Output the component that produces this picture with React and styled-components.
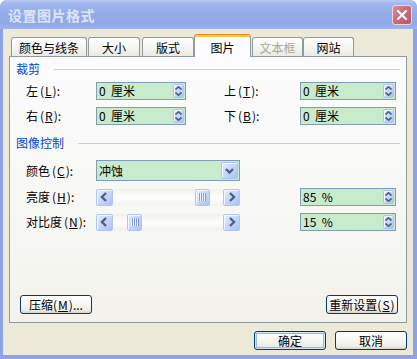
import React from 'react';
import styled, { createGlobalStyle, css } from 'styled-components';

const GlobalStyle = createGlobalStyle`
  html, body { margin: 0; padding: 0; background: #ffffff; }
  body {
    font-family: "Noto Sans CJK SC", "Liberation Sans", sans-serif;
    font-size: 12px;
    color: #000;
  }
  * { box-sizing: border-box; }
`;

const Window = styled.div`
  width: 417px;
  height: 359px;
  display: flex;
  flex-direction: column;
  border-radius: 7px 7px 0 0;
  overflow: hidden;
  background: #8ea3e6;
`;

const TitleBar = styled.div`
  height: 29px;
  flex: none;
  display: flex;
  align-items: center;
  justify-content: space-between;
  padding: 0 5px 0 8px;
  background: linear-gradient(to bottom, #b8c9f2 0%, #a3b8ee 12%, #96ace8 45%, #91a8e7 80%, #9fb3eb 100%);
`;

const Title = styled.div`
  font-size: 14px;
  font-weight: bold;
  color: #dbe5f8;
  letter-spacing: 0.5px;
`;

const CloseButton = styled.div`
  width: 20px;
  height: 20px;
  border: 1px solid #e9d6dc;
  border-radius: 3px;
  background: linear-gradient(135deg, #d9909a 0%, #c56b77 50%, #b85a68 100%);
  display: flex;
  align-items: center;
  justify-content: center;
`;

const Body = styled.div`
  flex: 1;
  margin: 0 4px 4px 3px;
  background: #ece9d8;
  display: flex;
  flex-direction: column;
`;

const TabRow = styled.div`
  height: 27px;
  flex: none;
  display: flex;
  align-items: flex-end;
  padding-left: 8px;
`;

const Tab = styled.div`
  width: ${p => p.$w}px;
  margin-left: ${p => p.$ml}px;
  height: 19px;
  border: 1px solid #919b9c;
  border-bottom: none;
  border-radius: 3px 3px 0 0;
  background: linear-gradient(to bottom, #ffffff 0%, #f6f6f3 50%, #ebeae4 100%);
  display: flex;
  align-items: center;
  justify-content: center;
  padding-top: 1px;
  color: ${p => (p.$disabled ? '#aca899' : '#000')};
  ${p => p.$active && css`
    height: 23px;
    margin-bottom: -1px;
    position: relative;
    z-index: 1;
    background: #fcfcfe;
    border-top: 1px solid #e68b2c;
    box-shadow: inset 0 2px 0 #ffc83c;
    padding-top: 2px;
  `}
`;

const Panel = styled.div`
  height: 267px;
  flex: none;
  margin: 0 6px;
  border: 1px solid #919b9c;
  background: linear-gradient(to bottom, #fcfcfe 0%, #f7f7f4 60%, #f3f2ec 100%);
  display: flex;
  flex-direction: column;
  padding: 5px 6px 8px 6px;
`;

const GroupHeader = styled.div`
  display: flex;
  align-items: center;
  height: 14px;
  margin-top: ${p => p.$mt || 0}px;
  color: #0046d5;
  line-height: 14px;
`;

const GroupLine = styled.div`
  flex: 1;
  height: 1px;
  margin-left: 14px;
  background: #d0d0bf;
`;

const FieldGrid = styled.div`
  display: grid;
  grid-template-columns: ${p => p.$cols};
  grid-template-rows: ${p => p.$rows};
  row-gap: ${p => p.$gap}px;
  align-items: center;
  padding-left: 10px;
  margin-top: ${p => p.$mt}px;
`;

const Label = styled.div`
  grid-column: ${p => p.$col};
  line-height: 14px;
  white-space: nowrap;
  u { text-decoration: underline; text-underline-offset: 1px; margin: 0 1px; }
  span.paren { margin-left: 2px; }
`;

const Field = styled.div`
  grid-column: ${p => p.$col};
  width: ${p => p.$w}px;
  height: ${p => p.$h || 18}px;
  border: 1px solid #7f9db9;
  background: #c8ebcb;
  display: flex;
  align-items: stretch;
  padding: 1px;
`;

const FieldText = styled.div`
  flex: 1;
  padding-left: 1px;
  line-height: 14px;
  display: flex;
  align-items: center;
  white-space: pre;
  font-size: 12px;
`;

const xpBlue = css`
  background: linear-gradient(135deg, #e9f0ff 0%, #cddcfd 35%, #bacffb 70%, #aac2f5 100%);
  border: 1px solid #b0c5f4;
  border-radius: 2px;
  box-shadow: inset 1px 1px 0 #f4f7ff;
`;

const Spin = styled.div`
  width: 11px;
  ${xpBlue};
  display: flex;
  flex-direction: column;
  align-items: center;
  justify-content: center;
  gap: 2px;
`;

const DropButton = styled.div`
  width: 17px;
  ${xpBlue};
  display: flex;
  align-items: center;
  justify-content: center;
`;

const ScrollBar = styled.div`
  grid-column: ${p => p.$col};
  width: 144px;
  height: 17px;
  display: flex;
  background: linear-gradient(to bottom, #f3f1ec 0%, #fefefe 50%, #f3f1ec 100%);
`;

const ScrollButton = styled.div`
  width: 17px;
  ${xpBlue};
  display: flex;
  align-items: center;
  justify-content: center;
`;

const Track = styled.div`
  flex: 1;
  display: flex;
  align-items: stretch;
`;

const Thumb = styled.div`
  width: 15px;
  ${xpBlue};
  display: flex;
  align-items: center;
  justify-content: center;
`;

const Spacer = styled.div`
  flex: 1;
`;

const PanelButtons = styled.div`
  margin-top: auto;
  display: flex;
  justify-content: space-between;
  padding: 0 2px 0 4px;
`;

const XPButton = styled.div`
  width: 72px;
  height: 19px;
  border: 1px solid #003c74;
  border-radius: 3px;
  background: linear-gradient(to bottom, #ffffff 0%, #f7f7f4 50%, #ecebe6 85%, #d6d0c5 100%);
  display: flex;
  align-items: center;
  justify-content: center;
  line-height: 14px;
  white-space: nowrap;
  u { text-decoration: underline; text-underline-offset: 1px; margin: 0 1px; }
  ${p => p.$default && css`
    box-shadow: inset 0 0 0 1px #cee7ff, inset 0 0 0 2px #98b8ea;
  `}
`;

const DialogButtons = styled.div`
  display: flex;
  justify-content: flex-end;
  gap: 9px;
  margin-top: 8px;
  padding-right: 6px;
`;

const SmallArrow = ({ dir }) => (
  <svg width="7" height="4" viewBox="0 0 7 4">
    <path
      d={dir === 'up' ? 'M0.5 3.5 L3.5 0.8 L6.5 3.5' : 'M0.5 0.5 L3.5 3.2 L6.5 0.5'}
      fill="none"
      stroke="#4d6185"
      strokeWidth="1.6"
    />
  </svg>
);

const BigChevron = ({ dir }) => (
  <svg width="9" height="10" viewBox="0 0 9 10">
    <path
      d={dir === 'left' ? 'M6 1 L2 5 L6 9' : dir === 'right' ? 'M3 1 L7 5 L3 9' : 'M1 3 L4.5 6.5 L8 3'}
      fill="none"
      stroke="#4d6185"
      strokeWidth="2.4"
    />
  </svg>
);

const Grip = () => (
  <svg width="8" height="8" viewBox="0 0 8 8">
    {[0.5, 2.5, 4.5, 6.5].map(x => (
      <line key={x} x1={x} y1="0" x2={x} y2="8" stroke="#f2f6ff" strokeWidth="1" />
    ))}
    {[1.5, 3.5, 5.5, 7.5].map(x => (
      <line key={x} x1={x} y1="0" x2={x} y2="8" stroke="#7f9ae0" strokeWidth="1" />
    ))}
  </svg>
);

const CloseX = () => (
  <svg width="10" height="10" viewBox="0 0 10 10">
    <path d="M1 1 L9 9 M9 1 L1 9" stroke="#fff" strokeWidth="2" strokeLinecap="square" />
  </svg>
);

const SpinField = ({ col, w, text }) => (
  <Field $col={col} $w={w}>
    <FieldText>{text}</FieldText>
    <Spin>
      <SmallArrow dir="up" />
      <SmallArrow dir="down" />
    </Spin>
  </Field>
);

const Slider = ({ col, pos }) => (
  <ScrollBar $col={col}>
    <ScrollButton><BigChevron dir="left" /></ScrollButton>
    <Track>
      <Spacer style={{ flex: pos }} />
      <Thumb><Grip /></Thumb>
      <Spacer style={{ flex: 1 - pos }} />
    </Track>
    <ScrollButton><BigChevron dir="right" /></ScrollButton>
  </ScrollBar>
);

const Key = ({ k }) => (
  <span className="paren">(<u>{k}</u>):</span>
);

const tabs = [
  { label: '颜色与线条', w: 76, ml: 0 },
  { label: '大小', w: 52, ml: 1 },
  { label: '版式', w: 52, ml: 2 },
  { label: '图片', w: 57, ml: 0, active: true },
  { label: '文本框', w: 51, ml: 1, disabled: true },
  { label: '网站', w: 51, ml: 0 },
];

export default function App() {
  return (
    <>
      <GlobalStyle />
      <Window>
        <TitleBar>
          <Title>设置图片格式</Title>
          <CloseButton><CloseX /></CloseButton>
        </TitleBar>
        <Body>
          <TabRow>
            {tabs.map(t => (
              <Tab key={t.label} $w={t.w} $ml={t.ml} $active={t.active} $disabled={t.disabled}>
                {t.label}
              </Tab>
            ))}
          </TabRow>
          <Panel>
            <GroupHeader>
              裁剪
              <GroupLine />
            </GroupHeader>
            <FieldGrid $cols="70px 90px 38px 76px 96px" $rows="18px 18px" $gap={7} $mt={6}>
              <Label $col={1}>左<Key k="L" /></Label>
              <SpinField col={2} w={90} text={'0  厘米'} />
              <Label $col={4}>上<Key k="T" /></Label>
              <SpinField col={5} w={96} text={'0  厘米'} />
              <Label $col={1}>右<Key k="R" /></Label>
              <SpinField col={2} w={90} text={'0  厘米'} />
              <Label $col={4}>下<Key k="B" /></Label>
              <SpinField col={5} w={96} text={'0  厘米'} />
            </FieldGrid>
            <GroupHeader $mt={11}>
              图像控制
              <GroupLine />
            </GroupHeader>
            <FieldGrid $cols="70px 144px 60px 96px" $rows="21px 18px 18px" $gap={7} $mt={10}>
              <Label $col={1}>颜色<Key k="C" /></Label>
              <Field $col="2 / span 1" $w={144} $h={21}>
                <FieldText>冲蚀</FieldText>
                <DropButton><BigChevron dir="down" /></DropButton>
              </Field>
              <div />
              <div />
              <Label $col={1}>亮度<Key k="H" /></Label>
              <Slider col={2} pos={0.86} />
              <SpinField col={4} w={96} text={'85  %'} />
              <Label $col={1}>对比度<Key k="N" /></Label>
              <Slider col={2} pos={0.15} />
              <SpinField col={4} w={96} text={'15  %'} />
            </FieldGrid>
            <PanelButtons>
              <XPButton>压缩(<u>M</u>)...</XPButton>
              <XPButton>重新设置(<u>S</u>)</XPButton>
            </PanelButtons>
          </Panel>
          <DialogButtons>
            <XPButton $default>确定</XPButton>
            <XPButton>取消</XPButton>
          </DialogButtons>
        </Body>
      </Window>
    </>
  );
}
